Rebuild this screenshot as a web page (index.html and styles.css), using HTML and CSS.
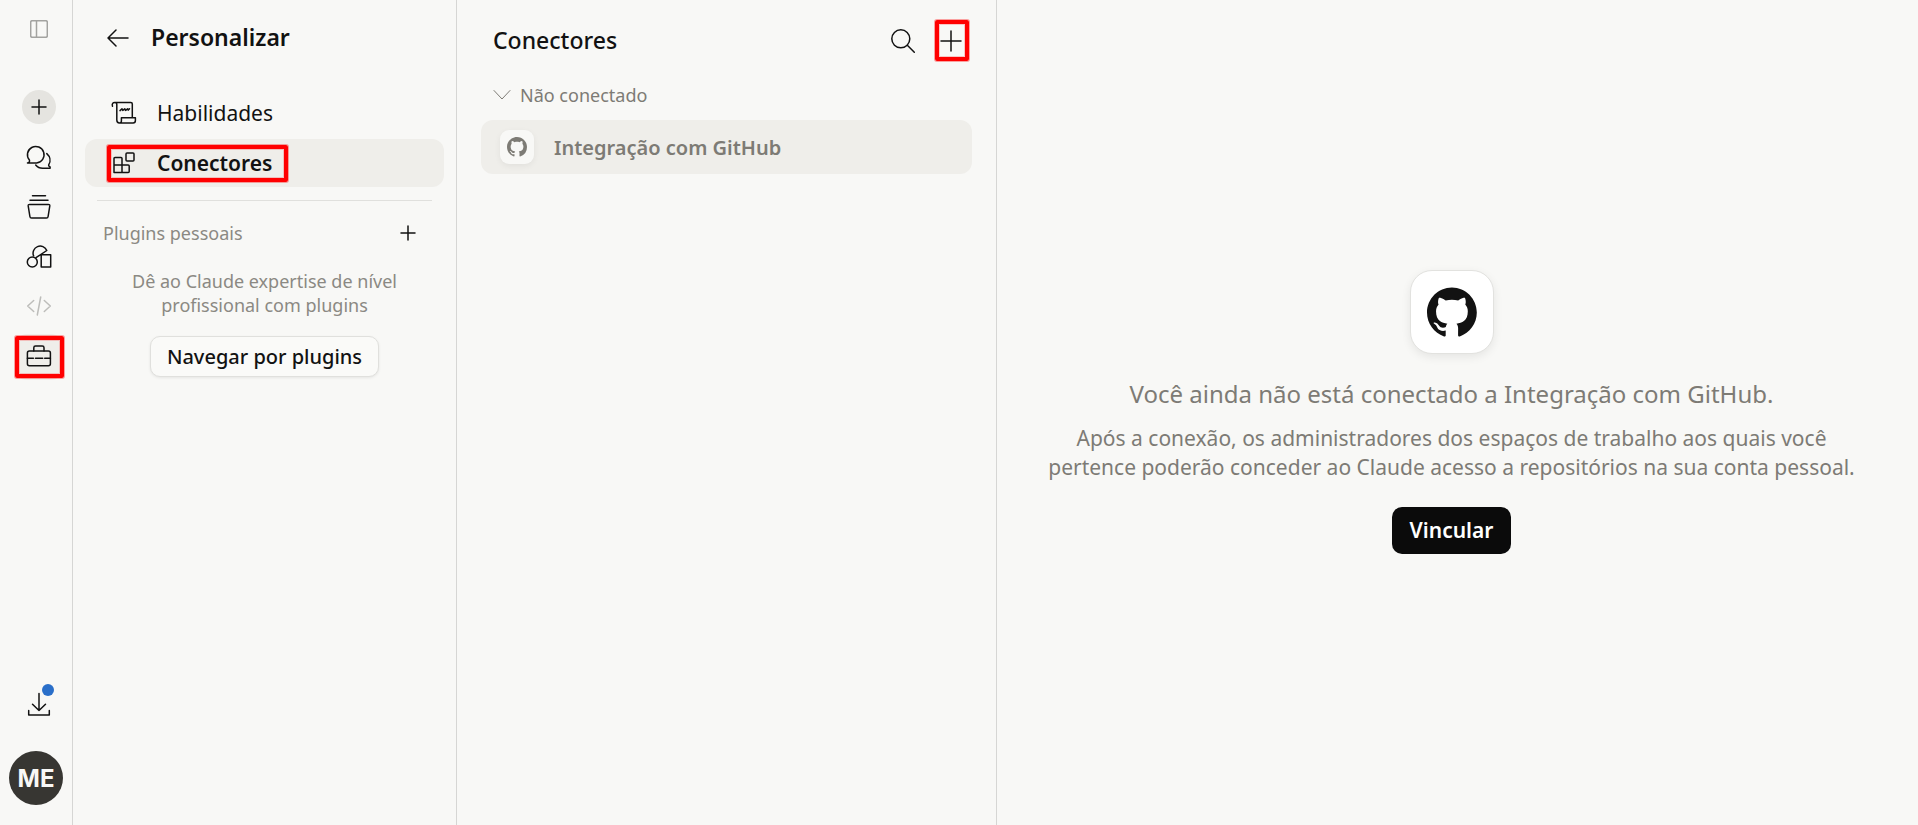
FILE: index.html
```html
<!DOCTYPE html>
<html lang="pt-BR">
<head>
<meta charset="utf-8">
<meta name="viewport" content="width=device-width, initial-scale=1">
<title>Personalizar – Conectores</title>
<link rel="stylesheet" href="styles.css">
</head>
<body>
<div class="app">
  <aside class="rail">
    <button class="rail-toggle" aria-label="Alternar barra lateral">
      <svg width="18" height="18" viewBox="0 0 18 18"><rect x=".7" y=".7" width="16.6" height="16.6" rx="1.5"/><path d="M6.5 1v16"/></svg>
    </button>
    <button class="rail-new" aria-label="Novo">
      <svg width="16" height="16" viewBox="0 0 16 16"><path d="M8 1v14M1 8h14"/></svg>
    </button>
    <nav class="rail-nav">
      <button class="rail-item" aria-label="Conversas">
        <svg width="26" height="26" viewBox="0 0 26 26"><path d="M1.500 19c1.800-.5 2.400-1.600 1.900-2.900A8.300 8.300 0 1 1 10.600 19zM20.800 9.600c3.200 2.800 4.200 7.300 2 11-.4.800.1 1.700 1.300 2.300v1.400h-7.400c-3 0-5.400-1.200-7-3.300"/></svg>
      </button>
      <button class="rail-item" aria-label="Projetos">
        <svg width="26" height="26" viewBox="0 0 26 26"><path d="M6.500 1.700h13M4 6.200h18M3.600 10.400h18.800c.9 0 1.500.7 1.400 1.500l-1.700 10.600c-.1.900-.8 1.500-1.700 1.500H5.600c-.9 0-1.600-.6-1.700-1.500L2.200 11.900c-.1-.8.500-1.500 1.400-1.500z"/></svg>
      </button>
      <button class="rail-item" aria-label="Artefatos">
        <svg width="26" height="26" viewBox="0 0 26 26"><circle cx="6.300" cy="18" r="5"/><path d="M7.600 11.900A6.800 6.800 0 0 1 20.800 6.500L10 13.700M15.200 10.700h9.500V23h-9.500z"/></svg>
      </button>
      <button class="rail-item muted" aria-label="Código">
        <svg width="26" height="26" viewBox="0 0 26 26"><path d="M7.700 6.500 1.700 12l6 5.500M18.300 6.500l6 5.500-6 5.500M14.700 3l-3.400 18"/></svg>
      </button>
      <button class="rail-item active" aria-label="Personalizar">
        <svg width="26" height="26" viewBox="0 0 26 26"><rect x="1.400" y="7" width="23" height="14.800" rx="2"/><path d="M7.800 7V3.800c0-1 .7-1.700 1.700-1.700h6.800c1 0 1.700.7 1.700 1.700V7M1.400 14.200h6M9.500 14.200h7.200M18.700 14.200h5.700"/></svg>
        <span class="mark"></span>
      </button>
    </nav>
    <div class="rail-foot">
      <button class="rail-download" aria-label="Baixar">
        <svg width="24" height="24" viewBox="0 0 24 24"><path d="M12 1.500v17M5.500 12.200l6.500 6.300 6.500-6.300M1.700 18.500v4.400h20.600v-4.400"/></svg>
        <span class="dot"></span>
      </button>
      <button class="avatar" aria-label="Conta">ME</button>
    </div>
  </aside>

  <section class="side">
    <header class="side-head">
      <button class="back" aria-label="Voltar">
        <svg width="22" height="18" viewBox="0 0 22 18"><path d="M9 1 1 9l8 8M1 9h20"/></svg>
      </button>
      <h1>Personalizar</h1>
    </header>
    <nav class="menu">
      <a class="menu-item" href="#habilidades">
        <svg width="26" height="26" viewBox="0 0 26 26"><path d="M1.500 6.300C.6 3.500 2 2.500 3.800 2.500h16c1 0 1.500.6 1.500 1.500v13.600M3.800 2.500c1.300 0 2 .9 2 2v15.500c0 1.800 1 2.900 2.600 2.900M8.400 22.900c1.300 0 2-.8 2-2v-3.100h14v2.600c0 1.600-.8 2.500-2.300 2.500zM9 10.600l2-1.800.8 1.600 2-1.600.8 1.600 2-1.600.7 1.300 1.200-1.300"/></svg>
        <span>Habilidades</span>
      </a>
      <a class="menu-item selected" href="#conectores" aria-current="page">
        <svg width="26" height="26" viewBox="0 0 26 26"><path d="M3 22.500v-14c0-.6.400-1 1-1h6c.6 0 1 .4 1 1v14M3 15h14.200c.6 0 1 .4 1 1v5.500c0 .6-.4 1-1 1H4c-.6 0-1-.4-1-1"/><rect x="15" y="3" width="8" height="8" rx="1"/></svg>
        <span>Conectores</span>
        <span class="mark"></span>
      </a>
    </nav>
    <div class="plugins">
      <div class="plugins-head">
        <h2>Plugins pessoais</h2>
        <button class="icon-button" aria-label="Adicionar plugin">
          <svg width="16" height="16" viewBox="0 0 16 16"><path d="M8 1v14M1 8h14"/></svg>
        </button>
      </div>
      <p>Dê ao Claude expertise de nível profissional com plugins</p>
      <button class="browse">Navegar por plugins</button>
    </div>
  </section>

  <section class="list">
    <header class="list-head">
      <h2>Conectores</h2>
      <button class="icon-button" aria-label="Buscar">
        <svg width="24" height="24" viewBox="0 0 24 24"><circle cx="9.800" cy="9.800" r="9"/><path d="m16.300 16.300 7 7"/></svg>
      </button>
      <button class="icon-button add" aria-label="Adicionar conector">
        <svg width="22" height="22" viewBox="0 0 22 22"><path d="M11 1v20M1 11h20"/></svg>
        <span class="mark"></span>
      </button>
    </header>
    <button class="group" aria-expanded="true">
      <svg width="18" height="12" viewBox="0 0 18 12"><path d="m1 1.500 8 8.500 8-8.500"/></svg>
      <span>Não conectado</span>
    </button>
    <a class="connector" href="#github">
      <span class="tile"><svg width="20" height="20" viewBox="0 0 16 16"><path d="M8 0C3.580 0 0 3.580 0 8c0 3.540 2.290 6.530 5.470 7.590.4.070.55-.17.55-.38 0-.19-.01-.82-.01-1.490-2.010.37-2.530-.49-2.690-.94-.09-.23-.48-.94-.82-1.130-.28-.15-.68-.52-.01-.53.63-.01 1.080.58 1.230.82.72 1.210 1.870.87 2.330.66.070-.52.28-.87.51-1.070-1.780-.2-3.640-.89-3.640-3.950 0-.87.31-1.590.82-2.150-.08-.2-.36-1.020.08-2.120 0 0 .67-.21 2.200.82.640-.18 1.320-.27 2-.27s1.360.09 2 .27c1.530-1.040 2.200-.82 2.200-.82.44 1.100.16 1.920.08 2.120.51.56.82 1.270.82 2.150 0 3.070-1.870 3.750-3.650 3.950.29.25.54.73.54 1.480 0 1.070-.01 1.930-.01 2.200 0 .21.15.46.55.38A8.010 8.010 0 0 0 16 8c0-4.420-3.580-8-8-8z"/></svg></span>
      <span>Integração com GitHub</span>
    </a>
  </section>

  <main class="detail">
    <div class="logo"><svg width="50" height="50" viewBox="0 0 98 96"><path fill-rule="evenodd" d="M48.854 0C21.839 0 0 22 0 49.217c0 21.756 13.993 40.172 33.405 46.690 2.427.49 3.316-1.059 3.316-2.362 0-1.141-.08-5.052-.08-9.127-13.590 2.934-16.420-5.867-16.420-5.867-2.184-5.704-5.420-7.170-5.420-7.170-4.448-3.015.324-3.015.324-3.015 4.934.326 7.523 5.052 7.523 5.052 4.367 7.496 11.404 5.378 14.235 4.074.404-3.178 1.699-5.378 3.074-6.600-10.839-1.141-22.243-5.378-22.243-24.283 0-5.378 1.940-9.778 5.014-13.200-.485-1.222-2.184-6.275.486-13.038 0 0 4.125-1.304 13.426 5.052a46.970 46.970 0 0 1 12.214-1.630c4.125 0 8.330.571 12.213 1.630 9.302-6.356 13.427-5.052 13.427-5.052 2.670 6.763.97 11.816.485 13.038 3.155 3.422 5.015 7.822 5.015 13.200 0 18.905-11.404 23.060-22.324 24.283 1.780 1.548 3.316 4.481 3.316 9.126 0 6.600-.08 11.897-.08 13.526 0 1.304.89 2.853 3.316 2.364 19.412-6.520 33.405-24.935 33.405-46.691C97.707 22 75.788 0 48.854 0z"/></svg></div>
    <h2>Você ainda não está conectado a Integração com GitHub.</h2>
    <p>Após a conexão, os administradores dos espaços de trabalho aos quais você pertence poderão conceder ao Claude acesso a repositórios na sua conta pessoal.</p>
    <button class="connect">Vincular</button>
  </main>
</div>
</body>
</html>
```
FILE: styles.css
```css
* { box-sizing: border-box; }

body {
  margin: 0;
  font-family: "Noto Sans", "Open Sans", sans-serif;
  background: #f8f8f6;
  color: #121212;
}

h1, h2, p { margin: 0; font-weight: 400; }

button {
  font: inherit;
  color: inherit;
  background: none;
  border: 0;
  padding: 0;
  cursor: pointer;
}

a { color: inherit; text-decoration: none; }

svg {
  display: block;
  flex: none;
  fill: none;
  stroke: currentColor;
  stroke-width: 1.5;
  stroke-linecap: round;
  stroke-linejoin: round;
}

.app { display: flex; min-height: 100vh; }

/* highlight frames */
.mark {
  position: absolute;
  margin: 1px;
  border: 4px solid #f00;
  border-radius: 2px;
  box-shadow: 0 0 0 1px rgba(255, 0, 0, .35), inset 0 0 0 1px rgba(255, 0, 0, .2);
  pointer-events: none;
}

/* icon rail */
.rail {
  display: flex;
  flex-direction: column;
  align-items: center;
  flex: none;
  width: 73px;
  padding: 20px 0;
  border-right: 1px solid #d6d6d4;
}

.rail button { display: grid; place-items: center; margin-left: 6px; }
.rail-toggle { color: #a3a3a0; }

.rail .rail-new {
  width: 34px;
  height: 34px;
  margin-top: 52px;
  border-radius: 50%;
  background: #e5e4e0;
}

.rail-nav { display: grid; gap: 4px; margin-top: 10px; }
.rail-item { position: relative; width: 48px; height: 46px; border-radius: 12px; }
.rail-item.muted { color: #bdbdba; }
.rail-item.active { background: #efeeea; }
.rail-item .mark { inset: 1px -2px 1px -1px; }

.rail-foot { display: grid; justify-items: center; gap: 35px; margin-top: auto; }
.rail-download { position: relative; }

.dot {
  position: absolute;
  top: -8px;
  right: -3px;
  width: 12px;
  height: 12px;
  border-radius: 50%;
  background: #2a6fc9;
}

.rail .avatar {
  width: 54px;
  height: 54px;
  margin-left: 0;
  border-radius: 50%;
  background: #373632;
  color: #f8f8f6;
  font-family: Inter, sans-serif;
  font-size: 24px;
  font-weight: 700;
}

/* customisation menu */
.side {
  flex: none;
  width: 384px;
  padding: 20px 12px;
  border-right: 1px solid #d6d6d4;
}

.side-head { display: flex; align-items: center; gap: 22px; height: 36px; padding-left: 22px; }
.side-head h1 { font-size: 23px; font-weight: 600; line-height: 32px; padding-bottom: 2px; }

.menu { display: grid; gap: 2px; margin-top: 33px; }

.menu-item {
  position: relative;
  display: flex;
  align-items: center;
  gap: 20px;
  height: 48px;
  padding: 0 26px;
  border-radius: 12px;
  font-size: 21px;
}

.menu-item.selected { background: #efeeea; font-weight: 600; }
.menu-item .mark { inset: 5px auto 4px 21px; width: 181px; }

.plugins {
  display: flex;
  flex-direction: column;
  align-items: center;
  margin: 13px 12px 0;
  padding-top: 16px;
  border-top: 1px solid #e0e0dd;
}

.plugins-head {
  display: flex;
  align-items: center;
  justify-content: space-between;
  align-self: stretch;
  height: 32px;
  padding: 0 16px 0 6px;
}

.plugins h2, .plugins p { color: #8b8983; font-size: 18px; }
.plugins p { max-width: 300px; margin-top: 20px; line-height: 24px; text-align: center; }

.browse {
  height: 41px;
  margin-top: 19px;
  padding: 0 16px;
  border: 1px solid #e0e0dd;
  border-radius: 10px;
  background: #fafaf8;
  box-shadow: 0 1px 3px rgba(0, 0, 0, .08);
  font-size: 20px;
  font-weight: 500;
}

/* connector list */
.list {
  flex: none;
  width: 540px;
  padding: 20px 24px;
  border-right: 1px solid #d6d6d4;
}

.list-head { display: flex; align-items: center; height: 42px; gap: 25px; padding: 0 10px 0 12px; }
.list-head h2 { flex: 1; font-size: 23px; font-weight: 500; line-height: 32px; padding-bottom: 2px; }
.add { position: relative; }
.add .mark { inset: -11px -8px -10px -6px; }

.group {
  display: flex;
  align-items: center;
  gap: 9px;
  height: 30px;
  margin: 18px 0 10px 12px;
  color: #7d7b75;
  font-size: 18px;
}

.group svg { stroke-width: 1; }

.connector {
  display: flex;
  align-items: center;
  gap: 20px;
  height: 54px;
  padding: 0 19px;
  border-radius: 12px;
  background: #efeeea;
  color: #7d7b75;
  font-size: 20px;
  font-weight: 600;
}

.tile {
  display: grid;
  place-items: center;
  width: 34px;
  height: 34px;
  border-radius: 9px;
  background: #f8f8f6;
  box-shadow: 0 2px 6px rgba(0, 0, 0, .06);
}

.tile svg, .logo svg { fill: currentColor; stroke: none; }

/* connector detail */
.detail {
  display: flex;
  flex: 1;
  flex-direction: column;
  align-items: center;
  justify-content: center;
  padding: 24px 24px 26px 12px;
  color: #7d7b75;
  text-align: center;
}

.logo {
  display: grid;
  place-items: center;
  width: 84px;
  height: 84px;
  border: 1px solid #e2e2df;
  border-radius: 22px;
  background: #fff;
  box-shadow: 0 3px 10px rgba(0, 0, 0, .08);
  color: #121212;
}

.detail h2 { margin-top: 24px; font-size: 24px; line-height: 32px; }
.detail p { max-width: 840px; margin-top: 14px; font-size: 21px; line-height: 29px; }

.connect {
  height: 47px;
  margin-top: 25px;
  padding: 0 18px;
  border-radius: 10px;
  background: #0b0b0b;
  color: #fff;
  font-size: 21px;
  font-weight: 600;
}
```
